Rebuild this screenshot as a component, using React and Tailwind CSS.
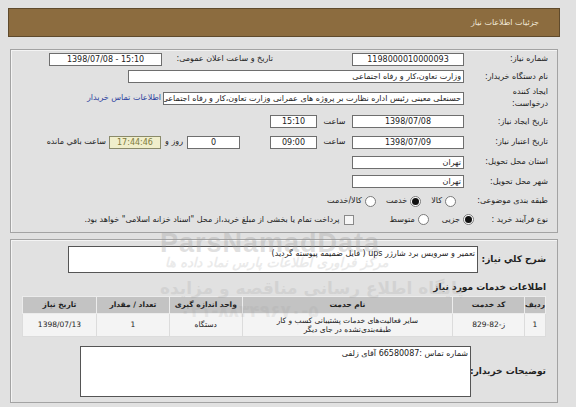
import React from 'react';

const box = "h-[13px] shrink-0 bg-white border border-[#6e6e6e] text-[8px] leading-[11px] text-[#222] overflow-hidden whitespace-nowrap";
const label = "shrink-0 text-[8px] leading-[10px] text-[#222] whitespace-nowrap";

const Radio = ({ on }) => (
  <span className="w-[11px] h-[11px] shrink-0 rounded-full border border-[#7a7a7a] bg-white flex items-center justify-center">
    {on && <span className="w-[7px] h-[7px] rounded-full bg-[#111]" />}
  </span>
);

const services = [
  { row: "1", code: "829-82-ز", name: ["سایر فعالیت‌های خدمات پشتیبانی کسب و کار", "طبقه‌بندی‌نشده در جای دیگر"], unit: "دستگاه", qty: "1", date: "1398/07/13" },
];

const App = () => {
  return (
    <div className="relative w-[576px] h-[407px] overflow-hidden bg-[#e1e1e1] font-['DejaVu_Sans',sans-serif] pt-[8px]">
      {/* Header */}
      <div dir="rtl" className="ml-[8px] w-[552px] h-[29px] bg-[#8c6c3f] border border-[#5f4a2c] flex items-center pr-[20px]">
        <span className="text-[8px] text-[#f1e8d6]">جزئیات اطلاعات نیاز</span>
      </div>

      {/* Need info panel */}
      <div dir="rtl" className="ml-[10px] w-[548px] mt-[12px] border border-[#a3a3a3] shadow-[inset_1px_1px_0_#f4f4f4] pr-[9px] pb-[4px]">
        <div className="flex items-center h-[18px]">
          <div className={label + " w-[84px]"}>شماره نیاز:</div>
          <div dir="ltr" className={box + " w-[112px] text-center"}>1198000010000093</div>
          <div className="w-[79px] shrink-0" />
          <div className={label + " w-[111px]"}>تاریخ و ساعت اعلان عمومی:</div>
          <div dir="ltr" className={box + " w-[113px] text-center"}>1398/07/08 - 15:10</div>
        </div>

        <div className="flex items-center h-[17px]">
          <div className={label + " w-[84px]"}>نام دستگاه خریدار:</div>
          <div className={box + " w-[336px] pr-[2px]"}>وزارت تعاون،کار و رفاه اجتماعی</div>
        </div>

        <div className="flex items-center h-[26px]">
          <div className={label + " w-[84px] leading-[12px] whitespace-normal"}>
            <div>ایجاد کننده</div>
            <div>درخواست:</div>
          </div>
          <div className={box + " w-[301px] pr-[2px]"}>حسنعلی معینی رئیس اداره نظارت بر پروژه های عمرانی وزارت تعاون،کار و رفاه اجتماعی</div>
          <span className="mr-[2px] text-[8px] text-[#2b3f9e] whitespace-nowrap">اطلاعات تماس خریدار</span>
        </div>

        <div className="flex items-center h-[21px]">
          <div className={label + " w-[84px]"}>تاریخ ایجاد نیاز:</div>
          <div dir="ltr" className={box + " w-[112px] text-center"}>1398/07/08</div>
          <div className={label + " w-[35px] text-center"}>ساعت</div>
          <div dir="ltr" className={box + " w-[47px] text-center"}>15:10</div>
        </div>

        <div className="flex items-center h-[20px]">
          <div className={label + " w-[84px]"}>تاریخ اعتبار نیاز:</div>
          <div dir="ltr" className={box + " w-[112px] text-center"}>1398/07/09</div>
          <div className={label + " w-[35px] text-center"}>ساعت</div>
          <div dir="ltr" className={box + " w-[47px] text-center"}>09:00</div>
          <div className="w-[30px] shrink-0" />
          <div dir="ltr" className={box + " w-[53px] text-center"}>0</div>
          <div className={label + " w-[26px] text-center"}>روز و</div>
          <div dir="ltr" className="h-[13px] w-[52px] shrink-0 bg-[#f0eecb] border border-[#8a8a6a] text-[8px] leading-[11px] text-[#7d7a3c] text-center">17:44:46</div>
          <div className={label + " mr-[3px]"}>ساعت باقي مانده</div>
        </div>

        <div className="flex items-center h-[20px]">
          <div className={label + " w-[84px]"}>استان محل تحویل:</div>
          <div className={box + " w-[112px] pr-[2px]"}>تهران</div>
        </div>

        <div className="flex items-center h-[19px]">
          <div className={label + " w-[84px]"}>شهر محل تحویل:</div>
          <div className={box + " w-[112px] pr-[2px]"}>تهران</div>
        </div>

        <div className="flex items-center h-[20px]">
          <div className={label + " w-[92px]"}>طبقه بندی موضوعی:</div>
          <Radio />
          <span className={label + " mr-[3px] ml-[10px]"}>کالا</span>
          <Radio on />
          <span className={label + " mr-[3px] ml-[10px]"}>خدمت</span>
          <Radio />
          <span className={label + " mr-[3px]"}>کالا/خدمت</span>
        </div>

        <div className="flex items-center h-[17px]">
          <div className={label + " w-[74px]"}>نوع فرآیند خرید :</div>
          <Radio on />
          <span className={label + " mr-[3px] ml-[13px]"}>جزیی</span>
          <Radio />
          <span className={label + " mr-[3px] ml-[36px]"}>متوسط</span>
          <span className="w-[10px] h-[10px] shrink-0 border border-[#8a8a8a] bg-[#f7f7f7]" />
          <span className={label + " mr-[4px]"}>پرداخت تمام یا بخشی از مبلغ خرید،از محل "اسناد خزانه اسلامی" خواهد بود.</span>
        </div>
      </div>

      {/* Description & services panel */}
      <div dir="rtl" className="ml-[10px] w-[548px] mt-[6px] h-[164px] border border-[#a3a3a3] shadow-[inset_1px_1px_0_#f4f4f4] px-[11px] pt-[6px]">
        <div className="flex items-center">
          <div className="w-[64px] shrink-0 text-[9px] font-bold text-[#222] whitespace-nowrap">شرح کلي نیاز:</div>
          <div className="w-[410px] h-[27px] shrink-0 mr-[4px] bg-white border border-[#555] text-[8px] leading-[11px] text-[#222] pr-[2px] pt-[1px]">
            تعمیر و سرویس برد شارژر ups ( فایل ضمیمه پیوسته گردید)
          </div>
        </div>

        <div className="mt-[8px] text-[9px] font-bold text-[#222] leading-[12px]">اطلاعات خدمات مورد نیاز</div>

        <table className="mt-[3px] w-[524px] border-collapse border border-[#e9e9e9] text-[7.5px] text-[#222]">
          <thead>
            <tr className="h-[17px] bg-[#c3c3c3]">
              <th className="w-[21px] border border-[#ececec] font-bold">ردیف</th>
              <th className="w-[72px] border border-[#ececec] font-bold">کد خدمت</th>
              <th className="w-[211px] border border-[#ececec] font-bold">نام حدمت</th>
              <th className="w-[73px] border border-[#ececec] font-bold">واحد اندازه گیری</th>
              <th className="w-[73px] border border-[#ececec] font-bold">تعداد / مقدار</th>
              <th className="w-[74px] border border-[#ececec] font-bold">تاریخ نیاز</th>
            </tr>
          </thead>
          <tbody>
            {services.map((s, i) => (
              <tr key={i} className="h-[23px] bg-[#f4f4f4] text-center">
                <td className="border border-[#dcdcdc]">{s.row}</td>
                <td dir="ltr" className="border border-[#dcdcdc]">{s.code}</td>
                <td className="border border-[#dcdcdc] leading-[9px]">
                  <div>{s.name[0]}</div>
                  <div>{s.name[1]}</div>
                </td>
                <td className="border border-[#dcdcdc]">{s.unit}</td>
                <td className="border border-[#dcdcdc]">{s.qty}</td>
                <td dir="ltr" className="border border-[#dcdcdc]">{s.date}</td>
              </tr>
            ))}
          </tbody>
        </table>

        <div className="flex items-center mt-[9px]">
          <div className="w-[71px] shrink-0 text-[9px] font-bold text-[#222] whitespace-nowrap">توضیحات خریدار:</div>
          <div className="w-[391px] h-[51px] shrink-0 mr-[4px] bg-white border border-[#555] text-[8px] leading-[11px] text-[#222] pr-[2px] pt-[1px]">
            شماره تماس :66580087 آقای زلفی
          </div>
        </div>
      </div>

      {/* Watermark */}
      <div className="pointer-events-none absolute left-[160px] top-[223px] text-[27px] font-bold text-[#9a9a9a] opacity-30 font-['Liberation_Sans',sans-serif] tracking-[1px]">ParsNamadData</div>
      <div dir="rtl" className="pointer-events-none absolute left-[165px] top-[253px] text-[13px] font-bold text-[#9a9a9a] opacity-20 italic">مرکز فراوری اطلاعات پارس نماد داده ها</div>
      <div dir="rtl" className="pointer-events-none absolute left-[160px] top-[276px] text-[17px] font-bold text-[#9a9a9a] opacity-20">پایگاه اطلاع رسانی مناقصه و مزایده</div>
      <div dir="ltr" className="pointer-events-none absolute left-[180px] top-[299px] text-[17px] font-bold text-[#9a9a9a] opacity-15">۰۲۱-۸۸۳۴۹۶۷۰-۵</div>
    </div>
  );
};

export default App;
